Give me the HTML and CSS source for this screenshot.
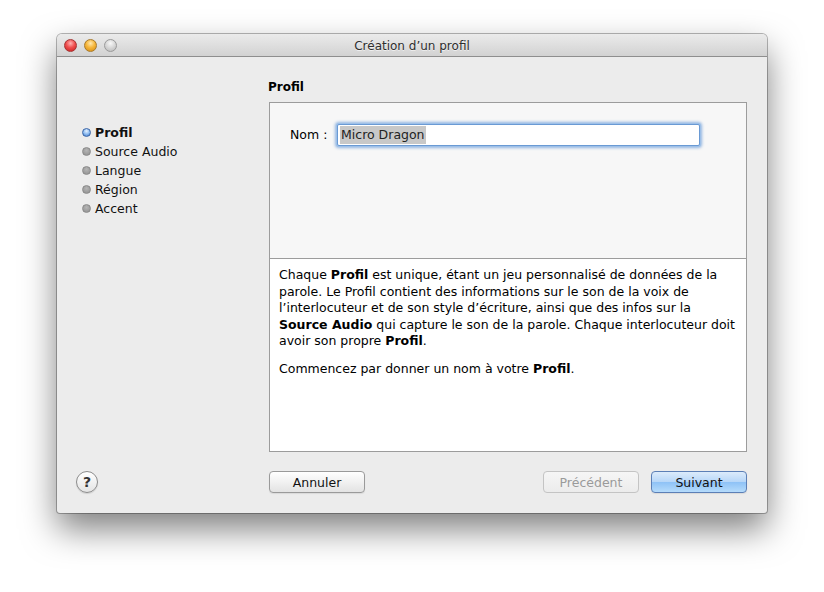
FILE: index.html
```html
<!DOCTYPE html>
<html lang="fr">
<head>
<meta charset="utf-8">
<title>Création d'un profil</title>
<link rel="stylesheet" href="styles.css">
</head>
<body>
<div class="window">
  <div class="titlebar">
    <div class="lights">
      <span class="light red"></span>
      <span class="light yellow"></span>
      <span class="light gray"></span>
    </div>
    <div class="title">Création d’un profil</div>
  </div>
  <div class="content">
    <ul class="steps">
      <li class="step current"><span class="dot"></span>Profil</li>
      <li class="step"><span class="dot"></span>Source Audio</li>
      <li class="step"><span class="dot"></span>Langue</li>
      <li class="step"><span class="dot"></span>Région</li>
      <li class="step"><span class="dot"></span>Accent</li>
    </ul>
    <div class="main">
      <h2 class="heading">Profil</h2>
      <div class="panel">
        <div class="form">
          <label class="label">Nom :</label>
          <div class="input"><span class="sel">Micro Dragon</span></div>
        </div>
        <div class="desc">
          <p>Chaque <b>Profil</b> est unique, étant un jeu personnalisé de données de la parole. Le Profil contient des informations sur le son de la voix de l’interlocuteur et de son style d’écriture, ainsi que des infos sur la <b>Source Audio</b> qui capture le son de la parole. Chaque interlocuteur doit avoir son propre <b>Profil</b>.</p>
          <p>Commencez par donner un nom à votre <b>Profil</b>.</p>
        </div>
      </div>
    </div>
    <div class="help-cell"><span class="help">?</span></div>
    <div class="buttons">
      <button class="btn">Annuler</button>
      <span class="spacer"></span>
      <button class="btn disabled">Précédent</button>
      <button class="btn primary">Suivant</button>
    </div>
  </div>
</div>
</body>
</html>
```
FILE: styles.css
```css
html, body {
  margin: 0;
  padding: 0;
  background: #ffffff;
}
body {
  width: 824px;
  height: 592px;
  overflow: hidden;
  font-family: "DejaVu Sans", "Noto Sans", sans-serif;
  font-size: 12px;
  color: #000;
}
.window {
  margin: 34px 0 0 57px;
  width: 710px;
  height: 479px;
  background: #ececec;
  border-radius: 5px 5px 3px 3px;
  box-shadow: 0 0 0 1px rgba(0,0,0,0.28), 0 16px 34px rgba(0,0,0,0.5);
  box-sizing: border-box;
  display: flex;
  flex-direction: column;
}
.titlebar {
  height: 22px;
  border-radius: 5px 5px 0 0;
  background: linear-gradient(#ebebeb, #d2d2d2);
  border-bottom: 1px solid #8e8e8e;
  display: flex;
  align-items: center;
  position: relative;
  flex: none;
}
.lights {
  display: flex;
  gap: 7px;
  padding: 1px 0 0 7px;
}
.light {
  width: 13px;
  height: 13px;
  border-radius: 50%;
  box-sizing: border-box;
}
.red {
  background: radial-gradient(circle at 50% 30%, #ffb3b3 0, #f05050 45%, #c81c1c 100%);
  border: 1px solid #a53434;
}
.yellow {
  background: radial-gradient(circle at 50% 30%, #ffe8b0 0, #f6b73c 45%, #d58a10 100%);
  border: 1px solid #a87a2a;
}
.gray {
  background: radial-gradient(circle at 50% 30%, #f8f8f8 0, #d6d6d6 50%, #b8b8b8 100%);
  border: 1px solid #9a9a9a;
}
.title {
  position: absolute;
  left: 0;
  right: 0;
  top: 1px;
  line-height: 23px;
  text-align: center;
  font-size: 12px;
  color: #2e2e2e;
  text-shadow: 0 1px 0 rgba(255,255,255,0.6);
  pointer-events: none;
}
.content {
  display: grid;
  grid-template-columns: 212px 478px;
  grid-template-rows: 395px auto;
  flex: 1;
}
.steps {
  list-style: none;
  margin: 0;
  padding: 66px 0 0 25px;
}
.step {
  display: flex;
  align-items: center;
  height: 19px;
  font-size: 12.5px;
  color: #111;
}
.step.current {
  font-weight: bold;
}
.dot {
  width: 9px;
  height: 9px;
  border-radius: 50%;
  margin-right: 4px;
  box-sizing: border-box;
  background: radial-gradient(circle at 50% 35%, #b5b5b5, #8e8e8e);
  border: 1px solid #8a8a8a;
}
.current .dot {
  background: radial-gradient(circle at 50% 30%, #e6f2ff 0, #8fbcf0 50%, #3c78c8 100%);
  border: 1px solid #3b66a8;
}
.main {
  padding-top: 22px;
}
.heading {
  margin: 0 0 0 -1px;
  font-size: 12px;
  font-weight: bold;
  height: 23px;
  line-height: 16px;
}
.panel {
  border: 1px solid #9c9c9c;
  background: #ffffff;
  height: 350px;
  box-sizing: border-box;
  display: flex;
  flex-direction: column;
}
.form {
  height: 156px;
  background: #f7f7f7;
  border-bottom: 1px solid #9c9c9c;
  display: flex;
  align-items: flex-start;
  padding: 21px 0 0 20px;
  box-sizing: border-box;
  flex: none;
}
.label {
  width: 47px;
  line-height: 22px;
  font-size: 12.5px;
}
.input {
  width: 363px;
  height: 22px;
  box-sizing: border-box;
  background: #fff;
  border: 1px solid #6a9ad4;
  box-shadow: 0 0 0 1px #9ec0e8, 0 0 3px 2px rgba(120,165,220,0.8);
  border-radius: 2px;
  display: flex;
  align-items: center;
  padding-left: 2px;
  font-size: 12.5px;
}
.sel {
  background: #c8c8c8;
  color: #222;
  padding: 1px 1px;
  line-height: 16px;
}
.desc {
  padding: 8px 9px 0 9px;
  font-size: 12.5px;
  line-height: 16.5px;
}
.desc p {
  margin: 0 0 11.5px 0;
}
.desc b {
  line-height: 16px;
}
.help-cell {
  padding: 19px 0 0 19px;
}
.help {
  display: flex;
  align-items: center;
  justify-content: center;
  width: 22px;
  height: 22px;
  box-sizing: border-box;
  border-radius: 50%;
  border: 1px solid #8c8c8c;
  background: linear-gradient(#ffffff, #e4e4e4);
  font-weight: bold;
  font-size: 14px;
  color: #333;
  box-shadow: 0 1px 1px rgba(0,0,0,0.12);
}
.buttons {
  display: flex;
  align-items: flex-start;
  padding-top: 19px;
  gap: 12px;
}
.spacer {
  flex: 1;
}
.btn {
  width: 96px;
  height: 22px;
  border-radius: 4px;
  border: 1px solid #9a9a9a;
  background: linear-gradient(#ffffff, #f1f1f1 50%, #e3e3e3);
  font-family: inherit;
  font-size: 12.5px;
  color: #111;
  padding: 0;
  box-shadow: 0 1px 1px rgba(0,0,0,0.08);
}
.btn.disabled {
  color: #9a9a9a;
  border-color: #c4c4c4;
  background: linear-gradient(#f6f6f6, #ececec);
  box-shadow: none;
}
.btn.primary {
  border-color: #5c7fb6;
  background: linear-gradient(#dcebfb, #b6d6f8 50%, #8ec2f6 51%, #b5dbfb);
}
```
